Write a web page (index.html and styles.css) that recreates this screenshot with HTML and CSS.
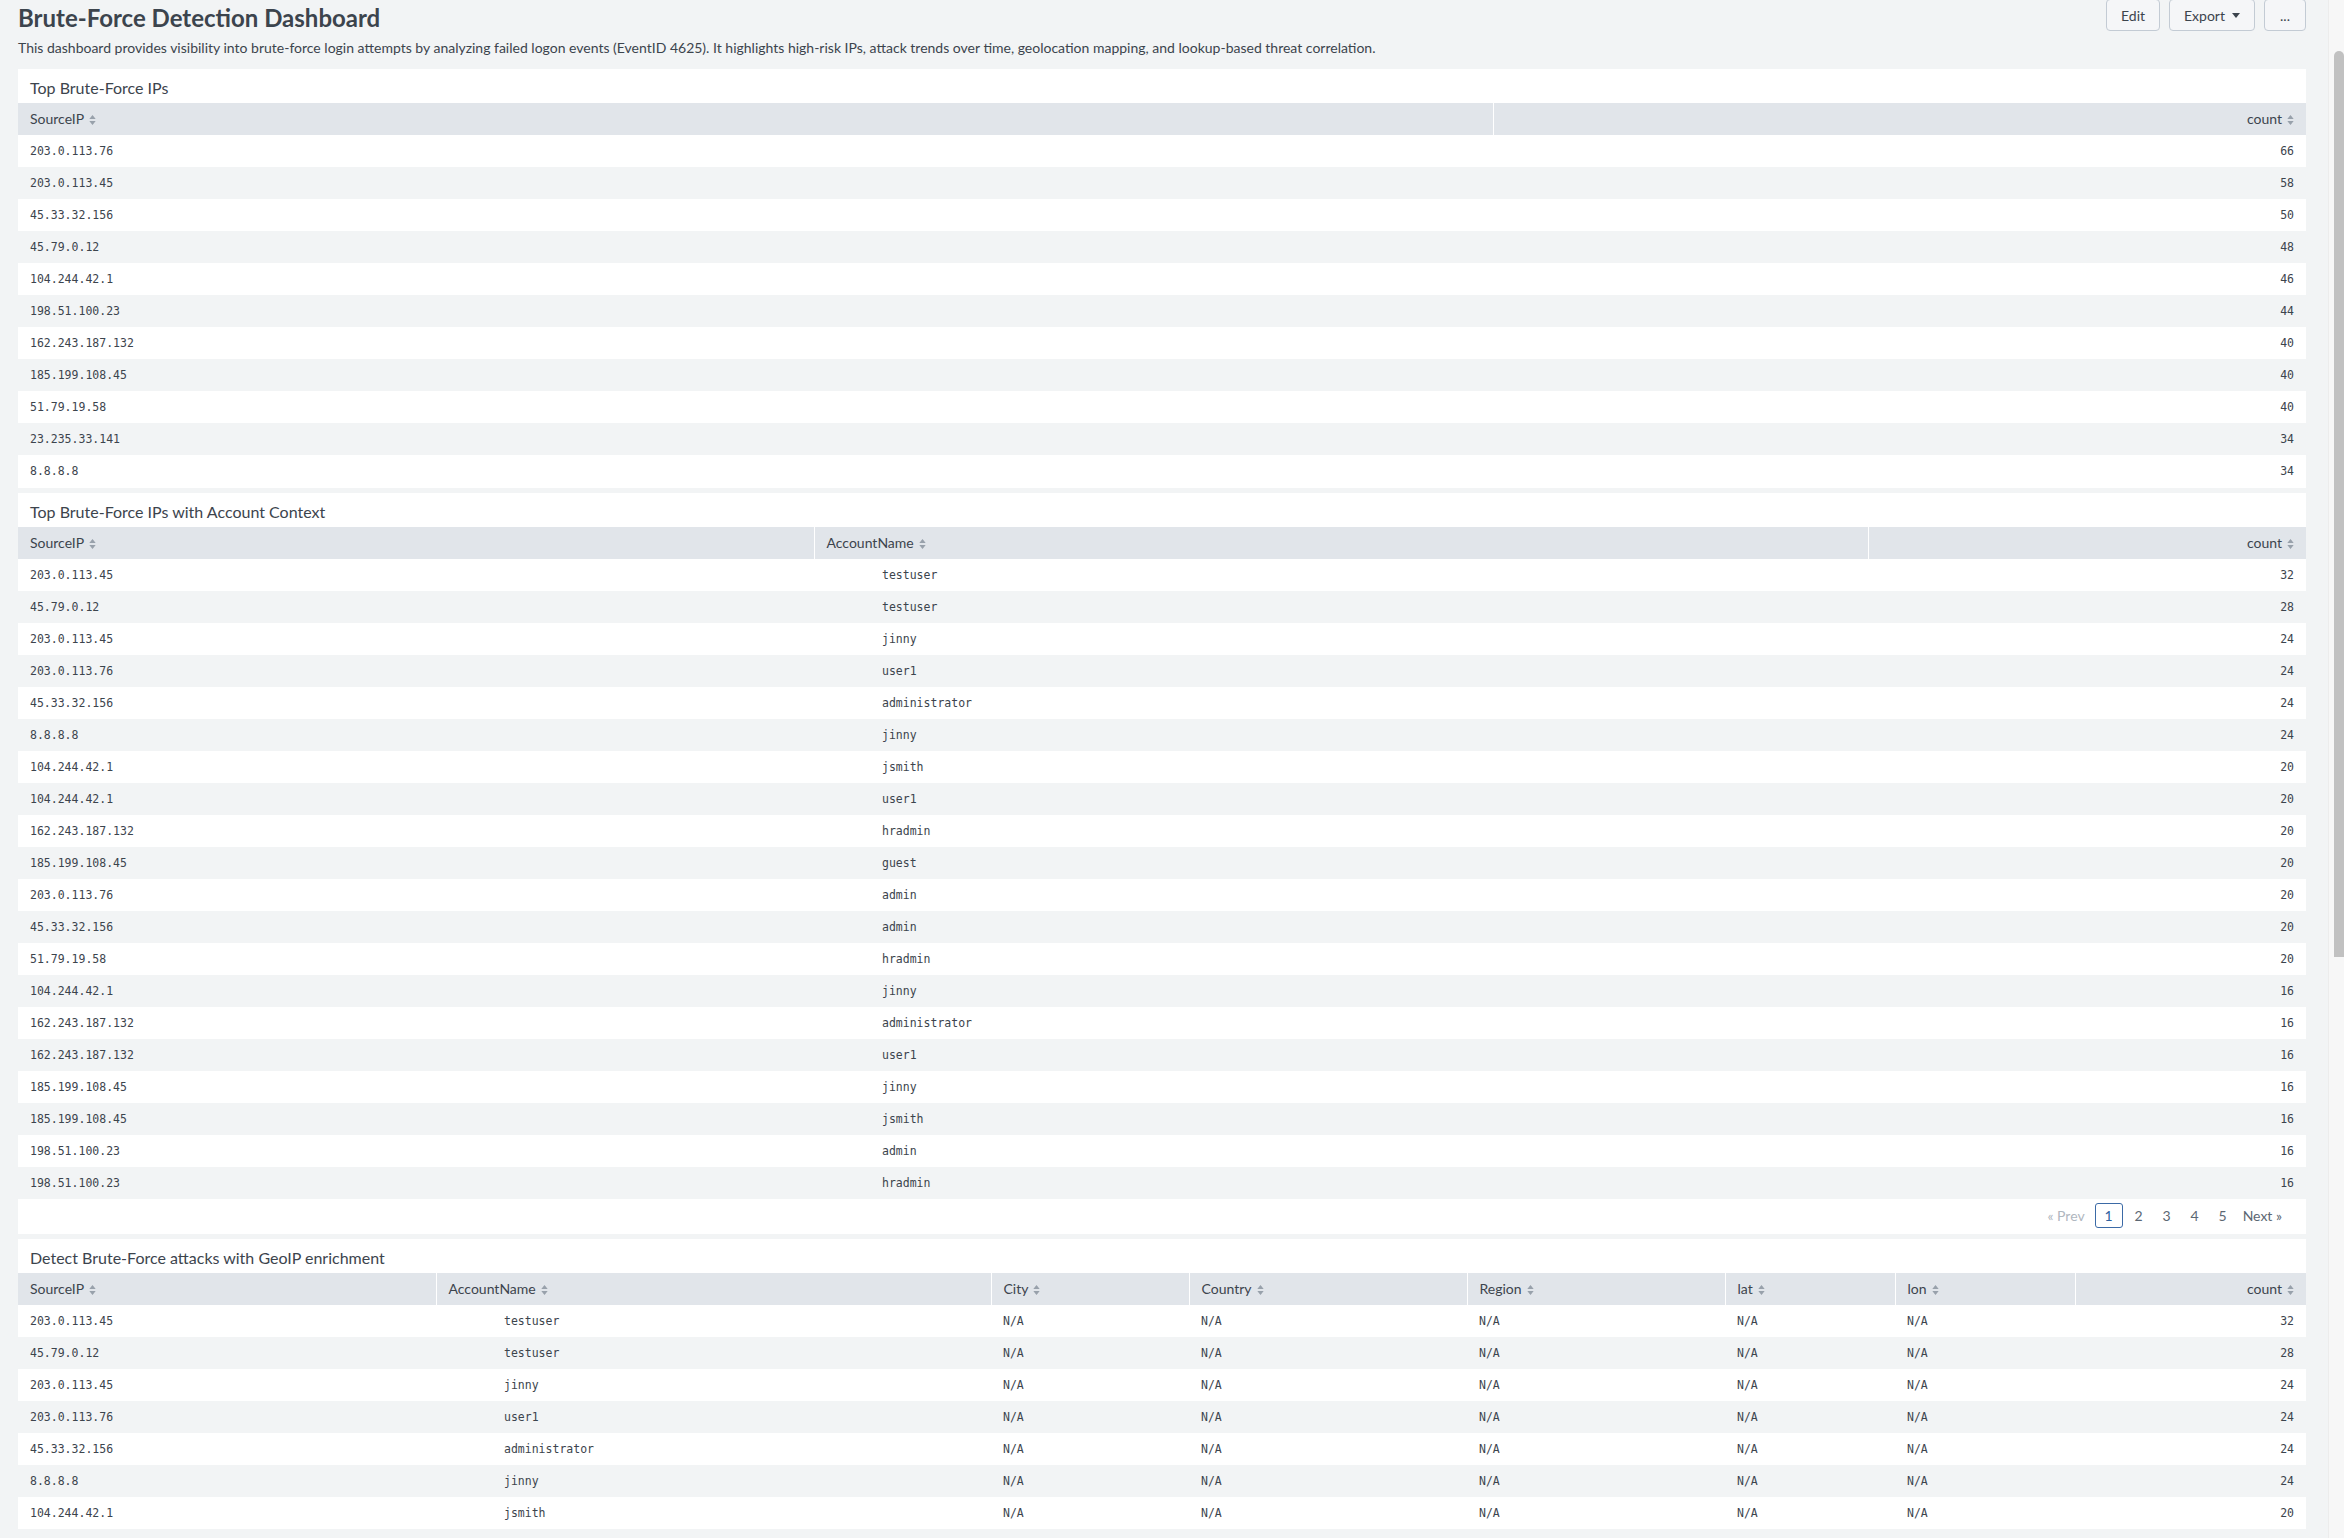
FILE: index.html
```html
<!DOCTYPE html>
<html>
<head>
<meta charset="utf-8">
<title>Brute-Force Detection Dashboard</title>
<link rel="stylesheet" href="styles.css">
</head>
<body>
<div class="page">
  <header class="top">
    <div class="heading">
      <h1 class="title">Brute-Force Detection Dashboard</h1>
      <p class="desc">This dashboard provides visibility into brute-force login attempts by analyzing failed logon events (EventID 4625). It highlights high-risk IPs, attack trends over time, geolocation mapping, and lookup-based threat correlation.</p>
    </div>
    <div class="actions">
      <button class="btn btn-edit">Edit</button>
      <button class="btn btn-export">Export <svg class="caret" viewBox="0 0 8 5" width="8" height="5"><path d="M0 0H8L4 5Z"/></svg></button>
      <button class="btn btn-more">...</button>
    </div>
  </header>

  <section class="panel p1">
    <h2 class="panel-title">Top Brute-Force IPs</h2>
    <table class="tbl">
      <colgroup><col class="c1-ip"><col class="c1-count"></colgroup>
      <thead><tr>
        <th>SourceIP<svg class="sort" viewBox="0 0 7 11"><path d="M3.5 0L7 4.5H0Z M3.5 11L0 6.5H7Z"/></svg></th>
        <th class="num">count<svg class="sort" viewBox="0 0 7 11"><path d="M3.5 0L7 4.5H0Z M3.5 11L0 6.5H7Z"/></svg></th>
      </tr></thead>
      <tbody>
        <tr><td>203.0.113.76</td><td class="num">66</td></tr>
        <tr><td>203.0.113.45</td><td class="num">58</td></tr>
        <tr><td>45.33.32.156</td><td class="num">50</td></tr>
        <tr><td>45.79.0.12</td><td class="num">48</td></tr>
        <tr><td>104.244.42.1</td><td class="num">46</td></tr>
        <tr><td>198.51.100.23</td><td class="num">44</td></tr>
        <tr><td>162.243.187.132</td><td class="num">40</td></tr>
        <tr><td>185.199.108.45</td><td class="num">40</td></tr>
        <tr><td>51.79.19.58</td><td class="num">40</td></tr>
        <tr><td>23.235.33.141</td><td class="num">34</td></tr>
        <tr><td>8.8.8.8</td><td class="num">34</td></tr>
      </tbody>
    </table>
  </section>

  <section class="panel p2">
    <h2 class="panel-title">Top Brute-Force IPs with Account Context</h2>
    <table class="tbl">
      <colgroup><col class="c2-ip"><col class="c2-acct"><col class="c2-count"></colgroup>
      <thead><tr>
        <th>SourceIP<svg class="sort" viewBox="0 0 7 11"><path d="M3.5 0L7 4.5H0Z M3.5 11L0 6.5H7Z"/></svg></th>
        <th>AccountName<svg class="sort" viewBox="0 0 7 11"><path d="M3.5 0L7 4.5H0Z M3.5 11L0 6.5H7Z"/></svg></th>
        <th class="num">count<svg class="sort" viewBox="0 0 7 11"><path d="M3.5 0L7 4.5H0Z M3.5 11L0 6.5H7Z"/></svg></th>
      </tr></thead>
      <tbody>
        <tr><td>203.0.113.45</td><td class="acct">testuser</td><td class="num">32</td></tr>
        <tr><td>45.79.0.12</td><td class="acct">testuser</td><td class="num">28</td></tr>
        <tr><td>203.0.113.45</td><td class="acct">jinny</td><td class="num">24</td></tr>
        <tr><td>203.0.113.76</td><td class="acct">user1</td><td class="num">24</td></tr>
        <tr><td>45.33.32.156</td><td class="acct">administrator</td><td class="num">24</td></tr>
        <tr><td>8.8.8.8</td><td class="acct">jinny</td><td class="num">24</td></tr>
        <tr><td>104.244.42.1</td><td class="acct">jsmith</td><td class="num">20</td></tr>
        <tr><td>104.244.42.1</td><td class="acct">user1</td><td class="num">20</td></tr>
        <tr><td>162.243.187.132</td><td class="acct">hradmin</td><td class="num">20</td></tr>
        <tr><td>185.199.108.45</td><td class="acct">guest</td><td class="num">20</td></tr>
        <tr><td>203.0.113.76</td><td class="acct">admin</td><td class="num">20</td></tr>
        <tr><td>45.33.32.156</td><td class="acct">admin</td><td class="num">20</td></tr>
        <tr><td>51.79.19.58</td><td class="acct">hradmin</td><td class="num">20</td></tr>
        <tr><td>104.244.42.1</td><td class="acct">jinny</td><td class="num">16</td></tr>
        <tr><td>162.243.187.132</td><td class="acct">administrator</td><td class="num">16</td></tr>
        <tr><td>162.243.187.132</td><td class="acct">user1</td><td class="num">16</td></tr>
        <tr><td>185.199.108.45</td><td class="acct">jinny</td><td class="num">16</td></tr>
        <tr><td>185.199.108.45</td><td class="acct">jsmith</td><td class="num">16</td></tr>
        <tr><td>198.51.100.23</td><td class="acct">admin</td><td class="num">16</td></tr>
        <tr><td>198.51.100.23</td><td class="acct">hradmin</td><td class="num">16</td></tr>
      </tbody>
    </table>
    <nav class="pager">
      <span class="pg disabled">« Prev</span>
      <span class="pg num-pg active">1</span>
      <span class="pg num-pg">2</span>
      <span class="pg num-pg">3</span>
      <span class="pg num-pg">4</span>
      <span class="pg num-pg">5</span>
      <span class="pg next">Next »</span>
    </nav>
  </section>

  <section class="panel p3">
    <h2 class="panel-title">Detect Brute-Force attacks with GeoIP enrichment</h2>
    <table class="tbl">
      <colgroup><col class="c3-ip"><col class="c3-acct"><col class="c3-city"><col class="c3-country"><col class="c3-region"><col class="c3-lat"><col class="c3-lon"><col class="c3-count"></colgroup>
      <thead><tr>
        <th>SourceIP<svg class="sort" viewBox="0 0 7 11"><path d="M3.5 0L7 4.5H0Z M3.5 11L0 6.5H7Z"/></svg></th>
        <th>AccountName<svg class="sort" viewBox="0 0 7 11"><path d="M3.5 0L7 4.5H0Z M3.5 11L0 6.5H7Z"/></svg></th>
        <th>City<svg class="sort" viewBox="0 0 7 11"><path d="M3.5 0L7 4.5H0Z M3.5 11L0 6.5H7Z"/></svg></th>
        <th>Country<svg class="sort" viewBox="0 0 7 11"><path d="M3.5 0L7 4.5H0Z M3.5 11L0 6.5H7Z"/></svg></th>
        <th>Region<svg class="sort" viewBox="0 0 7 11"><path d="M3.5 0L7 4.5H0Z M3.5 11L0 6.5H7Z"/></svg></th>
        <th>lat<svg class="sort" viewBox="0 0 7 11"><path d="M3.5 0L7 4.5H0Z M3.5 11L0 6.5H7Z"/></svg></th>
        <th>lon<svg class="sort" viewBox="0 0 7 11"><path d="M3.5 0L7 4.5H0Z M3.5 11L0 6.5H7Z"/></svg></th>
        <th class="num">count<svg class="sort" viewBox="0 0 7 11"><path d="M3.5 0L7 4.5H0Z M3.5 11L0 6.5H7Z"/></svg></th>
      </tr></thead>
      <tbody>
        <tr><td>203.0.113.45</td><td class="acct">testuser</td><td>N/A</td><td>N/A</td><td>N/A</td><td>N/A</td><td>N/A</td><td class="num">32</td></tr>
        <tr><td>45.79.0.12</td><td class="acct">testuser</td><td>N/A</td><td>N/A</td><td>N/A</td><td>N/A</td><td>N/A</td><td class="num">28</td></tr>
        <tr><td>203.0.113.45</td><td class="acct">jinny</td><td>N/A</td><td>N/A</td><td>N/A</td><td>N/A</td><td>N/A</td><td class="num">24</td></tr>
        <tr><td>203.0.113.76</td><td class="acct">user1</td><td>N/A</td><td>N/A</td><td>N/A</td><td>N/A</td><td>N/A</td><td class="num">24</td></tr>
        <tr><td>45.33.32.156</td><td class="acct">administrator</td><td>N/A</td><td>N/A</td><td>N/A</td><td>N/A</td><td>N/A</td><td class="num">24</td></tr>
        <tr><td>8.8.8.8</td><td class="acct">jinny</td><td>N/A</td><td>N/A</td><td>N/A</td><td>N/A</td><td>N/A</td><td class="num">24</td></tr>
        <tr><td>104.244.42.1</td><td class="acct">jsmith</td><td>N/A</td><td>N/A</td><td>N/A</td><td>N/A</td><td>N/A</td><td class="num">20</td></tr>
      </tbody>
    </table>
  </section>
</div>
<div class="scrollbar"><div class="thumb"></div></div>
</body>
</html>
```

FILE: styles.css
```css
html, body {
  margin: 0;
  padding: 0;
  background: #f2f4f5;
  overflow: hidden;
}
body {
  font-family: "Lato", "Open Sans", sans-serif;
  color: #3c444d;
}
.page {
  width: 2328px;
  box-sizing: border-box;
  padding: 0 22px 0 18px;
}
.top {
  display: flex;
  justify-content: space-between;
  align-items: flex-start;
}
.title {
  margin: 3px 0 0;
  font-size: 24px;
  line-height: 30px;
  font-weight: 700;
  color: #3c444d;
}
.desc {
  margin: 5px 0 0;
  font-size: 14px;
  line-height: 20px;
}
.actions {
  display: flex;
  gap: 9px;
  margin-top: -1px;
}
.btn {
  height: 32px;
  box-sizing: border-box;
  border: 1px solid #c3cbd4;
  border-radius: 4px;
  background: #f5f6f8;
  color: #3c444d;
  font-family: "Lato", "Open Sans", sans-serif;
  font-size: 14px;
  padding: 0 14px;
  display: flex;
  align-items: center;
  gap: 7px;
}
.btn-more {
  width: 42px;
  justify-content: center;
  padding: 0;
}
.caret {
  fill: #3c444d;
}
.panel {
  background: #fff;
}
.p1 {
  margin-top: 11px;
  padding-bottom: 1px;
}
.p2, .p3 {
  margin-top: 5px;
}
.panel-title {
  margin: 0;
  padding: 9px 12px 5px;
  font-size: 16px;
  line-height: 20px;
  font-weight: 400;
  color: #3c444d;
}
.tbl {
  width: 100%;
  border-collapse: collapse;
  table-layout: fixed;
}
.tbl th {
  background: #e1e5ea;
  height: 32px;
  box-sizing: border-box;
  padding: 0 12px 2px;
  text-align: left;
  font-weight: 400;
  font-size: 14px;
  color: #3c444d;
  white-space: nowrap;
}
.tbl th + th {
  border-left: 1px solid #fff;
}
.tbl td {
  height: 32px;
  padding: 0 12px;
  font-family: "DejaVu Sans Mono", "Liberation Mono", monospace;
  font-size: 11.5px;
  color: #3c444d;
  white-space: nowrap;
}
.tbl tbody tr:nth-child(even) td {
  background: #f2f4f5;
}
.tbl .num {
  text-align: right;
}
.tbl td.acct {
  padding-left: 68px;
}
.sort {
  width: 7px;
  height: 10px;
  margin-left: 5px;
  vertical-align: -1px;
  fill: #98a1ab;
}
.c1-ip { width: 1475px; }
.c1-count { width: 813px; }
.c2-ip { width: 796px; }
.c2-acct { width: 1054px; }
.c2-count { width: 438px; }
.c3-ip { width: 418px; }
.c3-acct { width: 555px; }
.c3-city { width: 198px; }
.c3-country { width: 278px; }
.c3-region { width: 258px; }
.c3-lat { width: 170px; }
.c3-lon { width: 180px; }
.c3-count { width: 231px; }
.pager {
  height: 35px;
  box-sizing: border-box;
  display: flex;
  justify-content: flex-end;
  align-items: center;
  padding: 0 24px 3px 0;
  font-size: 14px;
  color: #5c6773;
}
.pg {
  line-height: 23px;
}
.disabled {
  color: #b0b7bf;
  margin-right: 10px;
}
.num-pg {
  width: 28px;
  text-align: center;
}
.active {
  box-sizing: border-box;
  height: 25px;
  margin-right: 2px;
  border: 1px solid #3b6aa6;
  border-radius: 3px;
  color: #2f62a0;
}
.next {
  margin-left: 6px;
}
.scrollbar {
  position: fixed;
  top: 0;
  right: 0;
  width: 16px;
  height: 100%;
  background: #f7f7f7;
  border-left: 1px solid #ececec;
  box-sizing: border-box;
}
.thumb {
  position: absolute;
  top: 51px;
  left: 5px;
  right: 0;
  height: 906px;
  background: #c1c1c1;
  border-radius: 6px 6px 0 0;
}
```
